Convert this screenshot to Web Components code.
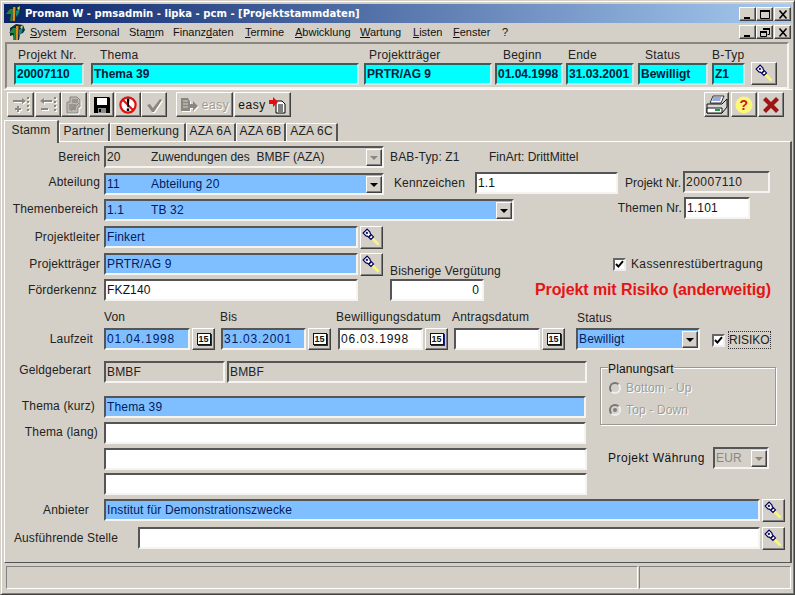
<!DOCTYPE html>
<html lang="de">
<head>
<meta charset="utf-8">
<title>Proman W</title>
<style>
  html, body { margin: 0; padding: 0; background: #d4d0c8; }
  body { width: 795px; height: 595px; overflow: hidden; font: 12px "Liberation Sans", Arial, sans-serif; letter-spacing: .15px; color: #222; }
  svg { display: block; }
  .gap { flex: none; }
  .date { letter-spacing: .8px; }
</style>
</head>
<body>
<script>
// shared helper: every element gets an open shadow root with its own style
function comp(name, css, html) {
  customElements.define(name, class extends HTMLElement {
    connectedCallback() {
      if (this.shadowRoot) return;
      this.attachShadow({ mode: "open" });
      const body = typeof html === "function" ? html(this) : html;
      this.shadowRoot.innerHTML = `<style>${css}</style>${body}`;
    }
  });
}

const raised = `border:1px solid; border-color:#fff #404040 #404040 #fff; box-shadow: inset -1px -1px 0 #808080;`;

const flashlight = `<svg width="21" height="21" viewBox="0 0 21 21"><g transform="rotate(45 10.500 10.500)">
  <path d="M11.500 9 20.500 9.300v2.400L11.500 12z" fill="#f8f67c"/>
  <path d="M1.500 7.700h4l1.500 1h4.500v3.600H7l-1.500 1h-4z" fill="#fff" stroke="#000058" stroke-width="1.200"/>
  <rect x="7.500" y="9" width="1.600" height="3" fill="#000058"/>
  <rect x="3" y="9.500" width="2" height="2" fill="#000058"/></g></svg>`;

comp("win-frame", `
  :host { display:flex; flex-direction:column; box-sizing:border-box; width:795px; height:595px;
    border:1px solid; border-color:#d4d0c8 #404040 #404040 #d4d0c8; padding:3px 2px 2px 3px;
    box-shadow: inset 1px 1px 0 #fff, inset -1px -1px 0 #808080; background:#d4d0c8; }
`, `<slot></slot>`);

comp("win-btn", `
  :host { display:block; box-sizing:border-box; width:17px; height:14px; background:#d4d0c8; ${raised} }
  svg { display:block; margin:1px 0 0 2px; }
`, (el) => {
  const g = {
    min: `<rect x="2" y="8" width="6" height="2" fill="#000"/>`,
    max: `<path d="M1.500 1.500h9v8h-9z" fill="none" stroke="#000"/><rect x="1" y="1" width="10" height="2" fill="#000"/>`,
    restore: `<path d="M4.500 2.500h6v5h-2M1.500 4.500h6v5h-6z" fill="none" stroke="#000"/><rect x="4" y="1" width="7" height="2" fill="#000"/><rect x="1" y="4" width="7" height="2" fill="#000"/>`,
    close: `<path d="M2.500 1.500l7 8M9.500 1.500l-7 8" stroke="#000" stroke-width="1.600" fill="none"/>`,
  }[el.getAttribute("kind")];
  return `<svg width="12" height="11" viewBox="0 0 12 11">${g}</svg>`;
});

comp("app-logo", `:host { display:block; width:17px; height:17px; }`, `
  <svg width="17" height="17" viewBox="0 0 17 17">
    <path d="M2 4 8 0l7 1 2 5-2 3-3 1-1 6H6l-1-5-3 1z" fill="#0b2c44"/>
    <path d="M1 9 5 4l3 0-1 12H5l1-7z" fill="#1f8a3a"/>
    <path d="M8 2h2.500l-.6 14H7.600z" fill="#e08a1a"/>
    <path d="M11 6l4-3-1 5-2 3-1 1z" fill="#138a7a"/>
    <path d="M12 3l3-2-1 4z" fill="#e8e040"/>
  </svg>`);

comp("title-bar", `
  :host { display:flex; align-items:center; height:19px; padding-left:1px; box-sizing:border-box;
    background:linear-gradient(90deg,#0a246a,#a6caf0); color:#fff; }
  .t { font:bold 11.200px "DejaVu Sans Condensed", "DejaVu Sans", sans-serif; font-stretch:condensed; letter-spacing:0; margin-left:3px; white-space:nowrap; flex:1; }
  .b { display:flex; margin-right:1px; }
  ::slotted(win-btn:last-child) { margin-left:1px; }
`, `<app-logo></app-logo><span class="t"><slot name="title"></slot></span><span class="b"><slot></slot></span>`);

comp("menu-bar", `
  :host { display:flex; align-items:center; height:19px; box-sizing:border-box; padding:0 0 1px 4px; font-size:11px; letter-spacing:0; color:#111; }
  .m { display:flex; flex:1; margin-left:5px; }
  .b { display:flex; margin-right:1px; }
  ::slotted(win-btn:last-child) { margin-left:1px; }
`, `<app-logo></app-logo><span class="m"><slot name="items"></slot></span><span class="b"><slot></slot></span>`);

comp("head-panel", `
  :host { display:flex; box-sizing:border-box; height:47px; margin:0 3px 0 1px; padding-left:7px;
    border:2px solid; border-color:#8a8780 #f6f5f1 #f6f5f1 #8a8780; letter-spacing:.22px; }
`, `<slot></slot>`);

comp("head-cell", `
  :host { display:flex; flex-direction:column; flex:none; }
  .l { height:19px; line-height:22px; white-space:nowrap; }
`, (el) => `<div class="l" style="padding-left:${el.getAttribute("pad") || 0}px">${el.getAttribute("label")}</div><slot></slot>`);

comp("ui-field", `
  :host { display:block; flex:none; box-sizing:border-box; height:22px; border:2px solid;
    border-color:#555 #f5f4f0 #f5f4f0 #555; padding-left:1px; line-height:18px; white-space:nowrap; overflow:hidden; background:#d4d0c8; color:#222; }
  :host([kind=white]) { background:#fff; color:#111; }
  :host([kind=blue]) { background:#80bfff; color:#001a5e; }
  :host([kind=cyan]) { background:#0ff; color:#00203a; font-weight:bold; letter-spacing:0; border-color:#3c5c5c #cfe9e6 #cfe9e6 #3c5c5c; }
  :host([align=right]) { text-align:right; padding-right:3px; }
`, `<slot></slot>`);

comp("ui-combo", `
  :host { display:flex; flex:none; box-sizing:border-box; height:22px; border:2px solid;
    border-color:#555 #f5f4f0 #f5f4f0 #555; padding-left:1px; line-height:18px; white-space:nowrap; background:#d4d0c8; color:#222; }
  :host([kind=blue]) { background:#80bfff; color:#001a5e; }
  .c { width:44px; flex:none; }
  .t { flex:1; overflow:hidden; }
  .d { flex:none; box-sizing:border-box; width:16px; height:17px; margin:1px 0 0 0; background:#d4d0c8; ${raised} display:flex; align-items:center; justify-content:center; }
  .d i { width:0; height:0; border:4px solid transparent; border-top:4px solid #000; border-bottom:0; }
  :host([off]) .d i { border-top-color:#8a8780; }
`, (el) => `${el.hasAttribute("code") ? `<span class="c">${el.getAttribute("code")}</span>` : ""}<span class="t"><slot></slot></span><span class="d"><i></i></span>`);

comp("ui-pick", `
  :host { display:flex; align-items:center; justify-content:center; flex:none; box-sizing:border-box; width:23px; height:23px; background:#d4d0c8; ${raised} }
`, flashlight);

comp("ui-cal", `
  :host { display:flex; align-items:center; justify-content:center; flex:none; box-sizing:border-box; width:23px; height:22px; background:#d4d0c8; ${raised} }
  b { display:block; box-sizing:border-box; width:14px; height:12px; background:#fff; border:1px solid #111; box-shadow:1px 1px 0 #20208a;
    font:bold 9px/10px "Liberation Sans", sans-serif; letter-spacing:0; text-align:center; color:#111; }
`, `<b>15</b>`);

comp("tool-bar", `
  :host { display:flex; align-items:flex-start; height:31px; padding:2px 0 0 3px; box-sizing:border-box;
    border-top:1px solid #fff; }
`, `<slot></slot>`);

comp("tool-btn", `
  :host { display:flex; align-items:center; justify-content:center; gap:3px; flex:none; box-sizing:border-box; height:25px; background:#d4d0c8; ${raised} font-size:12px; letter-spacing:.5px; color:#111; }
  :host([off]) { color:#a09c94; text-shadow:1px 1px 0 #fff; }
  ::slotted(svg[off]) { filter:drop-shadow(1px 1px 0 #fff); }
`, `<slot></slot>`);

comp("tab-strip", `
  :host { display:flex; align-items:flex-end; height:21px; position:relative; z-index:1; letter-spacing:.22px; }
`, `<slot></slot>`);

comp("ui-tab", `
  :host { display:block; flex:none; box-sizing:border-box; height:18px; line-height:15px; text-align:center; border:1px solid; border-width:1px 2px 0 1px;
    border-color:#fff #555 transparent #fff; white-space:nowrap; }
  :host([active]) { height:23px; line-height:18px; margin-bottom:-2px; background:#d4d0c8; }
`, `<slot></slot>`);

comp("form-panel", `
  :host { display:flex; flex-direction:column; box-sizing:border-box; height:422px; flex:none;
    border:1px solid; border-width:1px 2px 1px 1px; border-color:#fff #555 #555 #fff; padding-top:4px; }
`, `<slot></slot>`);

comp("f-row", `:host { display:flex; align-items:flex-start; flex:none; white-space:nowrap; }`, `<slot></slot>`);
comp("f-col", `:host { display:flex; flex-direction:column; flex:none; white-space:nowrap; }`, `<slot></slot>`);

comp("ui-label", `
  :host { display:block; flex:none; box-sizing:border-box; text-align:right; white-space:nowrap; line-height:22px; height:22px; color:#222; }
`, `<slot></slot>`);

comp("ui-check", `
  :host { display:flex; align-items:center; flex:none; gap:4px; height:14px; color:#222; }
  i { display:block; box-sizing:border-box; width:13px; height:13px; background:#fff; border:2px solid; border-color:#666 #eee #eee #666; }
  svg { display:block; }
`, `<i><svg width="9" height="9" viewBox="0 0 9 9"><path d="M1 4l2.400 2.600L8 1.200" fill="none" stroke="#000" stroke-width="2"/></svg></i><slot></slot>`);

comp("ui-radio", `
  :host { display:flex; align-items:center; gap:5px; height:14px; color:#a09c94; text-shadow:1px 1px 0 #fff; }
  i { display:block; width:12px; height:12px; border-radius:50%; box-sizing:border-box; background:#d4d0c8; border:2px solid; border-color:#777 #eee #eee #777; position:relative; }
  :host([on]) i::after { content:""; position:absolute; left:2px; top:2px; width:4px; height:4px; border-radius:50%; background:#808080; }
`, `<i></i><slot></slot>`);

comp("group-box", `
  :host { display:block; flex:none; margin-top:-1px; }
  fieldset { box-sizing:border-box; margin:0; padding:7px 0 0 8px; height:65px; width:176px; border:1px solid #9b9890; box-shadow:1px 1px 0 #fff, inset 1px 1px 0 #fff; display:flex; flex-direction:column; }
  legend { padding:0; margin-left:-1px; line-height:14px; color:#111; background:#d4d0c8; transform:translateY(2px); }
  .r { display:flex; flex-direction:column; gap:8px; }
`, (el) => `<fieldset><legend>${el.getAttribute("label")}</legend><div class="r"><slot></slot></div></fieldset>`);

comp("status-bar", `
  :host { display:flex; flex:none; gap:1px; height:23px; margin:3px 1px 0 2px; }
  span { display:block; box-sizing:border-box; height:23px; border:1px solid; border-color:#808080 #fff #fff #808080; }
`, `<span style="width:632px"></span><span style="flex:1"></span>`);
</script>

<win-frame>
  <title-bar>
    <span slot="title">Proman W - pmsadmin - lipka - pcm - [Projektstammdaten]</span>
    <win-btn kind="min"></win-btn><win-btn kind="max"></win-btn><win-btn kind="close"></win-btn>
  </title-bar>
  <menu-bar>
    <span slot="items" style="width:46px"><u>S</u>ystem</span>
    <span slot="items" style="width:53px"><u>P</u>ersonal</span>
    <span slot="items" style="width:44px">Sta<u>m</u>m</span>
    <span slot="items" style="width:72px">Finanz<u>d</u>aten</span>
    <span slot="items" style="width:50px"><u>T</u>ermine</span>
    <span slot="items" style="width:65px"><u>A</u>bwicklung</span>
    <span slot="items" style="width:53px"><u>W</u>artung</span>
    <span slot="items" style="width:40px"><u>L</u>isten</span>
    <span slot="items" style="width:49px"><u>F</u>enster</span>
    <span slot="items">?</span>
    <win-btn kind="min"></win-btn><win-btn kind="restore"></win-btn><win-btn kind="close"></win-btn>
  </menu-bar>

  <head-panel>
    <head-cell label="Projekt Nr." pad="4" style="width:70px"><ui-field kind="cyan">20007110</ui-field></head-cell>
    <head-cell label="Thema" pad="9" style="width:268px;margin-left:7px"><ui-field kind="cyan">Thema 39</ui-field></head-cell>
    <head-cell label="Projektträger" pad="5" style="width:128px;margin-left:5px"><ui-field kind="cyan">PRTR/AG 9</ui-field></head-cell>
    <head-cell label="Beginn" pad="8" style="width:68px;margin-left:3px"><ui-field kind="cyan">01.04.1998</ui-field></head-cell>
    <head-cell label="Ende" pad="2" style="width:68px;margin-left:3px"><ui-field kind="cyan">31.03.2001</ui-field></head-cell>
    <head-cell label="Status" pad="7" style="width:70px;margin-left:4px"><ui-field kind="cyan">Bewilligt</ui-field></head-cell>
    <head-cell label="B-Typ" style="width:33px;margin-left:4px"><ui-field kind="cyan">Z1</ui-field></head-cell>
    <head-cell label="&nbsp;" style="margin-left:6px"><ui-pick style="width:26px;margin-top:-1px"></ui-pick></head-cell>
  </head-panel>

  <tool-bar>
    <tool-btn off style="width:27px"><svg off width="20" height="20" viewBox="0 0 20 20" fill="#8a8780"><path d="M2 5h9V3l4 3-4 3V7H2z"/><path d="M6 11v2H4v2h2v2h2v-2h2v-2H8v-2z"/><rect x="16" y="2" width="2" height="2"/><rect x="16" y="6" width="2" height="2"/><rect x="16" y="10" width="2" height="2"/><rect x="16" y="14" width="2" height="2"/></svg></tool-btn>
    <tool-btn off style="width:26px;margin-left:1px"><svg off width="20" height="20" viewBox="0 0 20 20" fill="#8a8780"><path d="M14 5H6V3L2 6l4 3V7h8z"/><rect x="3" y="13" width="7" height="2"/><rect x="16" y="2" width="2" height="2"/><rect x="16" y="6" width="2" height="2"/><rect x="16" y="10" width="2" height="2"/><rect x="16" y="14" width="2" height="2"/></svg></tool-btn>
    <tool-btn off style="width:26px"><svg off width="20" height="20" viewBox="0 0 20 20"><path d="M6 2h7l3 3v7h-2v6H3V7h3z" fill="#bdb9b0" stroke="#8a8780"/><path d="M5 10h7M5 12h7M5 14h7M8 5h6M8 7h6" stroke="#77746d"/><path d="M7 16l8-8" stroke="#8a8780"/></svg></tool-btn>
    <tool-btn style="width:25px;margin-left:2px"><svg width="18" height="18" viewBox="0 0 18 18"><path d="M1 1h15l1 1v15H1z" fill="#000"/><rect x="4" y="2" width="10" height="7" fill="#fff"/><rect x="5" y="12" width="8" height="5" fill="#8a8a8a"/><rect x="6" y="13" width="2" height="3" fill="#000"/></svg></tool-btn>
    <tool-btn style="width:26px;margin-left:1px"><svg width="20" height="20" viewBox="0 0 20 20"><circle cx="10" cy="10" r="7.600" fill="#fff" stroke="#e01010" stroke-width="2.200"/><path d="M4.800 4.800l10.400 10.400" stroke="#e01010" stroke-width="2"/><path d="M8.800 3.600h2.600l-.6 8.600H9.400z" fill="#000"/><rect x="8.800" y="13.400" width="2.400" height="2.600" fill="#000"/></svg></tool-btn>
    <tool-btn off style="width:26px"><svg off width="20" height="20" viewBox="0 0 20 20"><path d="M3 10l3-1 3 4 7-9 2 1-8 12H8z" fill="#8a8780"/></svg></tool-btn>
    <tool-btn off style="width:57px;margin-left:9px"><svg off width="19" height="18" viewBox="0 0 19 18" fill="#8a8780"><path d="M1 2h7l2 3v3h3V5l5 5-5 5v-3H10v3H1z"/><path d="M3 5h5M3 8h5M3 11h5" stroke="#d4d0c8"/></svg>easy</tool-btn>
    <tool-btn style="width:57px;margin-left:1px">easy<svg width="18" height="18" viewBox="0 0 18 18"><path d="M7 5h6l3 3v9H7z" fill="#fff" stroke="#000"/><path d="M9 9h5M9 11h5M9 13h5M9 15h5" stroke="#000"/><path d="M0 4h4V1l5 5-5 5V8H0z" fill="#e80c0c"/></svg></tool-btn>
    <span class="gap" style="width:413px"></span>
    <tool-btn style="width:25px"><svg width="22" height="20" viewBox="0 0 22 20"><path d="M7 1h11l-3 7H4z" fill="#fff" stroke="#333"/><path d="M7 3h8M6.300 5h8" stroke="#3050c0" stroke-width="1.200"/><path d="M1 9h15l5-5v8l-5 6H1z" fill="#d8d8d8" stroke="#111"/><path d="M1 13h15v5H1z" fill="#fff" stroke="#111"/><rect x="9" y="14" width="5" height="2" fill="#10a040"/></svg></tool-btn>
    <tool-btn style="width:26px;margin-left:2px"><svg width="20" height="20" viewBox="0 0 20 20"><circle cx="10" cy="10" r="8.500" fill="#fdf77a"/><text x="10" y="15" text-anchor="middle" font-family="Liberation Sans" font-weight="bold" font-size="14" fill="#d01818">?</text></svg></tool-btn>
    <tool-btn style="width:26px;margin-left:1px"><svg width="18" height="18" viewBox="0 0 18 18"><path d="M2.500 2.500l13 13M15.500 2.500l-13 13" stroke="#9c1414" stroke-width="4.200"/></svg></tool-btn>
  </tool-bar>

  <tab-strip>
    <ui-tab active style="width:55px">Stamm</ui-tab>
    <ui-tab style="width:51px">Partner</ui-tab>
    <ui-tab style="width:76px">Bemerkung</ui-tab>
    <ui-tab style="width:50px">AZA 6A</ui-tab>
    <ui-tab style="width:50px">AZA 6B</ui-tab>
    <ui-tab style="width:52px">AZA 6C</ui-tab>
  </tab-strip>

  <form-panel>
    <f-row style="height:22px">
      <ui-label style="width:99px;padding-right:4px">Bereich</ui-label>
      <ui-combo off code="20" style="width:280px;letter-spacing:0">Zuwendungen des &nbsp;BMBF (AZA)</ui-combo>
      <ui-label style="margin-left:6px;width:99px;text-align:left">BAB-Typ: Z1</ui-label>
      <ui-label style="text-align:left;letter-spacing:0">FinArt: DrittMittel</ui-label>
    </f-row>
    <f-row style="height:22px;margin-top:4px">
      <ui-label style="width:99px;padding-right:4px;margin-top:-1px">Abteilung</ui-label>
      <ui-combo kind="blue" code="11" style="width:280px;margin-top:1px">Abteilung 20</ui-combo>
      <ui-label style="width:91px;padding-right:10px">Kennzeichen</ui-label>
      <ui-field kind="white" style="width:143px">1.1</ui-field>
      <ui-label style="width:65px;padding-right:2px;letter-spacing:0">Projekt Nr.</ui-label>
      <ui-field style="width:87px;margin-top:-1px;letter-spacing:.5px">20007110</ui-field>
    </f-row>
    <f-row style="height:24px;margin-top:3px">
      <ui-label style="width:99px;padding-right:6px;margin-top:1px">Themenbereich</ui-label>
      <ui-combo kind="blue" code="1.1" style="width:410px;margin-top:2px">TB 32</ui-combo>
      <ui-label style="width:170px;padding-right:2px">Themen Nr.</ui-label>
      <ui-field kind="white" style="width:66px">1.101</ui-field>
    </f-row>
    <f-row style="height:75px;margin-top:5px">
      <f-col style="width:385px">
        <f-row style="height:23px">
          <ui-label style="width:99px;padding-right:4px">Projektleiter</ui-label>
          <ui-field kind="blue" style="width:254px">Finkert</ui-field>
          <ui-pick style="margin-left:2px"></ui-pick>
        </f-row>
        <f-row style="height:23px;margin-top:4px">
          <ui-label style="width:99px;padding-right:4px">Projektträger</ui-label>
          <ui-field kind="blue" style="width:254px">PRTR/AG 9</ui-field>
          <ui-pick style="margin-left:2px"></ui-pick>
        </f-row>
        <f-row style="height:22px;margin-top:3px">
          <ui-label style="width:99px;padding-right:7px">Förderkennz</ui-label>
          <ui-field kind="white" style="width:254px">FKZ140</ui-field>
        </f-row>
      </f-col>
      <f-col>
        <f-row style="height:53px;align-items:flex-end">
          <ui-label style="width:223px;text-align:left;height:14px;line-height:14px;margin-bottom:1px">Bisherige Vergütung</ui-label>
          <ui-check style="margin-bottom:8px;letter-spacing:.35px;gap:5px">Kassenrestübertragung</ui-check>
        </f-row>
        <f-row style="height:22px">
          <ui-field kind="white" align="right" style="width:94px">0</ui-field>
          <ui-label style="margin-left:51px;color:#e61414;font-size:16px;font-weight:bold;letter-spacing:-.1px">Projekt mit Risiko (anderweitig)</ui-label>
        </f-row>
      </f-col>
    </f-row>
    <f-row style="height:14px;margin-top:9px;line-height:14px">
      <span class="gap" style="width:99px"></span>
      <span class="gap" style="width:116px">Von</span>
      <span class="gap" style="width:116px">Bis</span>
      <span class="gap" style="width:116px;letter-spacing:.3px">Bewilligungsdatum</span>
      <span class="gap" style="width:125px;letter-spacing:.2px">Antragsdatum</span>
      <span class="gap" style="margin-top:1px">Status</span>
    </f-row>
    <f-row style="height:22px;margin-top:4px">
      <ui-label style="width:99px;padding-right:11px">Laufzeit</ui-label>
      <ui-field class="date" kind="blue" style="width:86px">01.04.1998</ui-field><ui-cal style="margin-left:2px"></ui-cal>
      <ui-field class="date" kind="blue" style="width:85px;margin-left:6px">31.03.2001</ui-field><ui-cal style="margin-left:2px"></ui-cal>
      <ui-field class="date" kind="white" style="width:85px;margin-left:7px">06.03.1998</ui-field><ui-cal style="margin-left:2px"></ui-cal>
      <ui-field kind="white" style="width:86px;margin-left:6px"></ui-field><ui-cal style="margin-left:2px"></ui-cal>
      <ui-combo kind="blue" style="width:124px;margin-left:11px">Bewilligt</ui-combo>
      <ui-check style="margin:5px 0 0 12px;letter-spacing:0"><span style="outline:1px dotted #333;padding:1px 0;margin-left:0">RISIKO</span></ui-check>
    </f-row>
    <f-row style="height:134px;margin-top:11px">
      <f-col style="width:595px">
        <f-row style="height:22px">
          <ui-label style="width:99px;padding-right:13px;margin-top:-2px">Geldgeberart</ui-label>
          <ui-field style="width:121px">BMBF</ui-field>
          <ui-field style="width:360px;margin-left:2px">BMBF</ui-field>
        </f-row>
        <f-row style="height:22px;margin-top:13px">
          <ui-label style="width:99px;padding-right:9px;margin-top:-1px">Thema (kurz)</ui-label>
          <ui-field kind="blue" style="width:482px">Thema 39</ui-field>
        </f-row>
        <f-row style="height:22px;margin-top:4px">
          <ui-label style="width:99px;padding-right:6px;margin-top:-1px">Thema (lang)</ui-label>
          <ui-field kind="white" style="width:482px"></ui-field>
        </f-row>
        <f-row style="height:22px;margin-top:4px">
          <span class="gap" style="width:99px"></span>
          <ui-field kind="white" style="width:483px"></ui-field>
        </f-row>
        <f-row style="height:22px;margin-top:3px">
          <span class="gap" style="width:99px"></span>
          <ui-field kind="white" style="width:483px"></ui-field>
        </f-row>
      </f-col>
      <f-col>
        <group-box label="Planungsart">
          <ui-radio>Bottom - Up</ui-radio>
          <ui-radio on>Top - Down</ui-radio>
        </group-box>
        <f-row style="height:22px;margin-top:22px;padding-left:8px">
          <ui-label style="width:105px;text-align:left;color:#111;letter-spacing:.5px">Projekt Währung</ui-label>
          <ui-combo off style="width:56px;color:#8a8780">EUR</ui-combo>
        </f-row>
      </f-col>
    </f-row>
    <f-row style="height:23px;margin-top:4px">
      <ui-label style="width:99px;padding-right:15px">Anbieter</ui-label>
      <ui-field kind="blue" style="width:656px">Institut für Demonstrationszwecke</ui-field>
      <ui-pick style="margin-left:2px"></ui-pick>
    </f-row>
    <f-row style="height:23px;margin-top:5px">
      <ui-label style="width:133px;padding-right:20px">Ausführende Stelle</ui-label>
      <ui-field kind="white" style="width:622px"></ui-field>
      <ui-pick style="margin-left:2px"></ui-pick>
    </f-row>
  </form-panel>
  <status-bar></status-bar>
</win-frame>
</body>
</html>
